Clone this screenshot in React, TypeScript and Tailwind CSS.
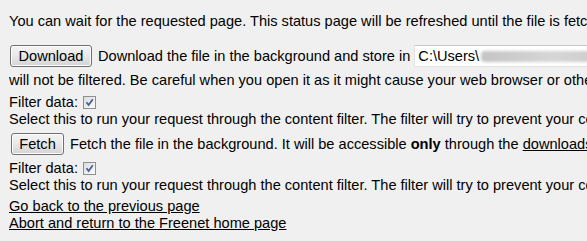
import type { ReactNode } from 'react';

function WinButton({ children, className = '' }: { children: ReactNode; className?: string }) {
  return (
    <span
      className={`inline-flex h-[22px] shrink-0 items-center justify-center rounded-[3px] border border-[#707070] bg-linear-to-b from-[#f4f4f4] via-[#e8e8e8] to-[#d3d3d3] text-black shadow-[inset_0_0_0_1px_#fcfcfc] ${className}`}
    >
      {children}
    </span>
  );
}

function CheckBox() {
  return (
    <span className="ml-[5px] inline-flex h-[13px] w-[13px] shrink-0 items-center justify-center border border-[#8f8f8f] bg-linear-to-br from-[#dcdcdc] to-[#fbfbfb]">
      <svg viewBox="0 0 11 11" className="h-[11px] w-[11px]">
        <path d="M2.5 5.2 L4.6 8 L8.8 2.3" fill="none" stroke="#4a5f97" strokeWidth="1.8" />
      </svg>
    </span>
  );
}

export default function App() {
  return (
    <div
      className="relative h-[242px] w-[587px] overflow-hidden whitespace-nowrap bg-[#f0f0f0] pl-[9px] text-[14.6px] leading-[17px] text-black"
      style={{ fontFamily: '"Liberation Sans", Arial, sans-serif' }}
    >
      <div className="pt-[13px]">
        You can wait for the requested page. This status page will be refreshed until the file is fetched.
      </div>

      <div className="mt-[15px] flex h-[22px] items-center">
        <WinButton className="ml-[1px] w-[82px]">Download</WinButton>
        <span className="ml-[6px] shrink-0">Download the file in the background and store in</span>
        <span className="ml-[4px] flex h-[22px] w-[300px] shrink-0 items-center border border-[#e2e2e2] border-t-[#c8c8c8] bg-white pl-[3px]">
          <span className="shrink-0">C:\Users\</span>
          <span className="ml-[2px] h-[11px] w-[140px] shrink-0 rounded-sm bg-linear-to-r from-[#c4c4c4] via-[#d6d6d6] to-[#c8c8c8] blur-[1.5px]" />
        </span>
      </div>

      <div className="mt-[5px]">
        will not be filtered. Be careful when you open it as it might cause your web browser or other programs to do things.
      </div>

      <div className="mt-[5px] flex items-center">
        Filter data:
        <CheckBox />
      </div>
      <div>
        Select this to run your request through the content filter. The filter will try to prevent your computer from being harmed.
      </div>

      <div className="mt-[5px] flex h-[22px] items-center">
        <WinButton className="ml-[2px] w-[53px]">Fetch</WinButton>
        <span className="ml-[6px] shrink-0">
          Fetch the file in the background. It will be accessible <b>only</b> through the{' '}
          <span className="underline">downloads page</span>
        </span>
      </div>

      <div className="mt-[5px] flex items-center">
        Filter data:
        <CheckBox />
      </div>
      <div>
        Select this to run your request through the content filter. The filter will try to prevent your computer from being harmed.
      </div>

      <div className="mt-[4px] underline">Go back to the previous page</div>
      <div className="underline">Abort and return to the Freenet home page</div>

      <div className="absolute bottom-0 left-0 h-px w-full bg-[#d4d4d4]" />
    </div>
  );
}
